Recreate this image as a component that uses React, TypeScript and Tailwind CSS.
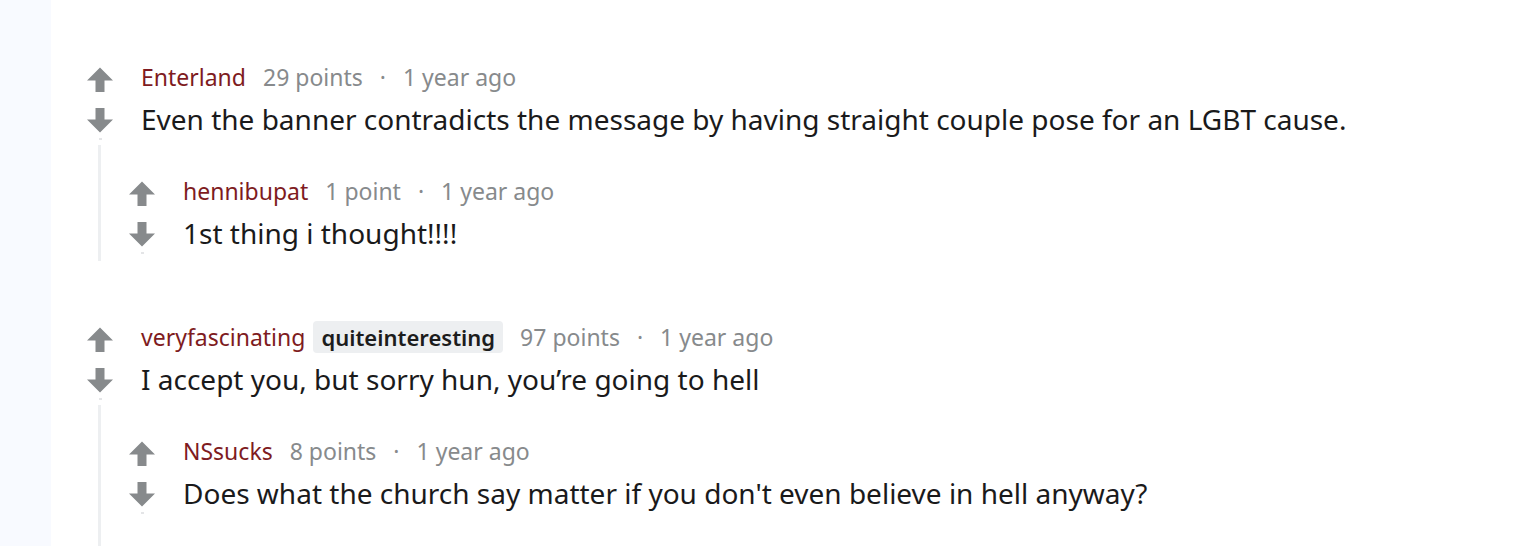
type Reply = {
  author: string;
  flair?: string;
  points: string;
  age: string;
  body: string;
  replies?: Reply[];
};

const COMMENTS: Reply[] = [
  {
    author: 'Enterland',
    points: '29 points',
    age: '1 year ago',
    body: 'Even the banner contradicts the message by having straight couple pose for an LGBT cause.',
    replies: [{ author: 'hennibupat', points: '1 point', age: '1 year ago', body: '1st thing i thought!!!!' }],
  },
  {
    author: 'veryfascinating',
    flair: 'quiteinteresting',
    points: '97 points',
    age: '1 year ago',
    body: 'I accept you, but sorry hun, you\u2019re going to hell',
    replies: [
      {
        author: 'NSsucks',
        points: '8 points',
        age: '1 year ago',
        body: "Does what the church say matter if you don't even believe in hell anyway?",
      },
    ],
  },
];

const Arrow = ({ down }: { down?: boolean }) => (
  <svg width="26" height="25" viewBox="0 0 26 25" className={down ? 'rotate-180' : ''}>
    <path d="M13 0.5 L26 13.5 H17.5 V25 H8.5 V13.5 H0 Z" fill="#878a8c" />
  </svg>
);

const Comment = ({ c, last }: { c: Reply; last?: boolean }) => (
  <div>
    <div className="flex items-start">
      <div className="flex w-[26px] flex-col items-center pt-[6px]">
        <Arrow />
        <div className="mt-[16px]">
          <Arrow down />
        </div>
        <div className="mt-[5px] h-[2px] w-[3px] bg-[#e4e5e7]" />
      </div>
      <div className="ml-[28px]">
        <div className="flex h-[32px] items-center text-[23px] text-[#878a8c]">
          <span className="text-[#7e1b21]">{c.author}</span>
          {c.flair && (
            <span className="ml-[8px] flex h-[32px] items-center rounded-[4px] bg-[#edeff1] px-[8px] text-[22px] font-semibold text-[#1c1c1c]">
              {c.flair}
            </span>
          )}
          <span className="ml-[17px]">{c.points}</span>
          <span className="mx-[17px]">·</span>
          <span>{c.age}</span>
        </div>
        <p className="mt-[6px] text-[28px] leading-[40px] text-[#1a1a1b]">{c.body}</p>
      </div>
    </div>
    {c.replies && (
      <div className={`ml-[11px] mt-[5px] border-l-[3px] border-[#edeff1] pl-[28px] pt-[30px] ${last ? 'pb-[40px]' : 'pb-[7px]'}`}>
        {c.replies.map((r) => (
          <Comment key={r.author} c={r} />
        ))}
      </div>
    )}
  </div>
);

export default function App() {
  return (
    <div className="flex h-[546px] overflow-hidden bg-white font-['Noto_Sans',sans-serif]">
      <div className="w-[51px] shrink-0 bg-[#f8faff]" />
      <div className="flex flex-col gap-[60px] pl-[36px] pt-[61px]">
        {COMMENTS.map((c, i) => (
          <Comment key={c.author} c={c} last={i === COMMENTS.length - 1} />
        ))}
      </div>
    </div>
  );
}
